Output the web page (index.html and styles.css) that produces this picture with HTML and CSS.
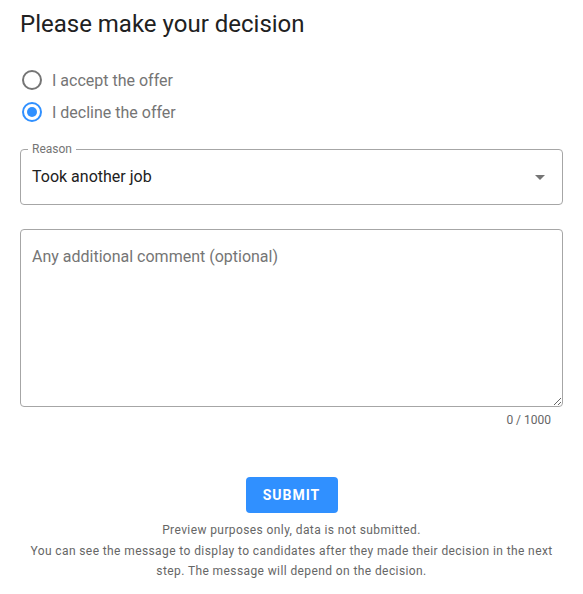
FILE: index.html
```html
<!DOCTYPE html>
<html>
<head>
<meta charset="utf-8">
<link rel="stylesheet" href="styles.css">
</head>
<body>
<div class="page">
  <h1 class="title">Please make your decision</h1>
  <div class="radios">
    <label class="radio">
      <svg class="radio-icon" width="24" height="24" viewBox="0 0 24 24"><circle cx="12" cy="12" r="9" fill="none" stroke="#757575" stroke-width="2"/></svg>
      <span class="radio-label">I accept the offer</span>
    </label>
    <label class="radio">
      <svg class="radio-icon" width="24" height="24" viewBox="0 0 24 24"><circle cx="12" cy="12" r="9" fill="none" stroke="#3090ff" stroke-width="2"/><circle cx="12" cy="12" r="5" fill="#3090ff"/></svg>
      <span class="radio-label">I decline the offer</span>
    </label>
  </div>
  <div class="select">
    <span class="select-legend">Reason</span>
    <span class="select-value">Took another job</span>
    <svg class="select-arrow" width="10" height="5" viewBox="0 0 10 5"><path d="M0 0 L10 0 L5 5 Z" fill="#757575"/></svg>
  </div>
  <textarea class="comment" placeholder="Any additional comment (optional)"></textarea>
  <div class="counter">0 / 1000</div>
  <div class="actions">
    <button class="submit">SUBMIT</button>
    <p class="note">Preview purposes only, data is not submitted.<br>You can see the message to display to candidates after they made their decision in the next step. The message will depend on the decision.</p>
  </div>
</div>
</body>
</html>
```
FILE: styles.css
```css
* { box-sizing: border-box; }
body {
  margin: 0;
  font-family: Roboto, "Liberation Sans", sans-serif;
  background: #fff;
}
.page {
  padding: 8px 20px 0 20px;
  display: flex;
  flex-direction: column;
}
.title {
  margin: 0;
  font-size: 24px;
  line-height: 32px;
  font-weight: 400;
  color: #212121;
}
.radios {
  margin-top: 24px;
  display: flex;
  flex-direction: column;
}
.radio {
  height: 32px;
  display: flex;
  align-items: center;
  gap: 8px;
}
.radio-icon {
  display: block;
}
.radio-label {
  font-size: 16px;
  color: #757575;
}
.select {
  position: relative;
  margin-top: 21px;
  padding: 0 17px 0 11px;
  height: 56px;
  border: 1px solid #a6a6a6;
  border-radius: 4px;
  display: flex;
  align-items: center;
  justify-content: space-between;
}
.select-legend {
  position: absolute;
  top: -8px;
  left: 7px;
  padding: 0 4px;
  background: #fff;
  font-size: 12px;
  line-height: 14px;
  color: #757575;
}
.select-value {
  font-size: 16px;
  color: #212121;
  margin-top: -1px;
}
.select-arrow {
  display: block;
}
.comment {
  margin-top: 24px;
  height: 178px;
  width: 100%;
  border: 1px solid #a6a6a6;
  border-radius: 4px;
  padding: 17px 11px;
  font-family: Roboto, "Liberation Sans", sans-serif;
  font-size: 16px;
  line-height: 20px;
  color: #212121;
  resize: vertical;
  display: block;
  outline: none;
}
.comment::placeholder {
  color: #757575;
  opacity: 1;
}
.counter {
  align-self: flex-end;
  margin-right: 12px;
  margin-top: 5px;
  font-size: 12px;
  line-height: 16px;
  color: #666;
}
.actions {
  margin-top: 49px;
  display: flex;
  flex-direction: column;
  align-items: center;
}
.submit {
  width: 92px;
  height: 36px;
  border: none;
  border-radius: 4px;
  background: #3090ff;
  color: #fff;
  font-family: Roboto, "Liberation Sans", sans-serif;
  font-size: 14px;
  font-weight: 700;
  letter-spacing: 1px;
}
.note {
  margin: 7px 0 0 0;
  padding: 0 10px;
  text-align: center;
  font-size: 12px;
  line-height: 20.5px;
  letter-spacing: 0.4px;
  color: #666;
}
```
